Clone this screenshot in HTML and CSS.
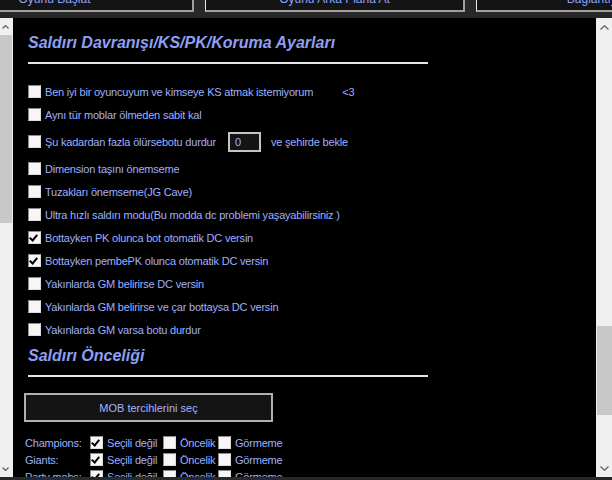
FILE: index.html
```html
<!DOCTYPE html>
<html lang="tr">
<head>
    <meta charset="UTF-8">
    <title>Bot Ayarları</title>
    <link rel="stylesheet" href="styles.css">
</head>
<body>
    <div class="topbar">
        <button class="tbtn first">Oyunu Başlat</button>
        <button class="tbtn">Oyunu Arka Plana At</button>
        <button class="tbtn">Bağlantıyı Kes</button>
    </div>

    <div class="main">
        <div class="scroll left">
            <span class="arrow up"><svg width="7" height="4" viewBox="0 0 7 4"><path d="M0.5 3.5 L3.5 0.5 L6.5 3.5" fill="none" stroke="#606060" stroke-width="1.2"/></svg></span>
            <div class="thumb left-thumb"></div>
            <span class="arrow down"><svg width="7" height="4" viewBox="0 0 7 4"><path d="M0.5 0.5 L3.5 3.5 L6.5 0.5" fill="none" stroke="#606060" stroke-width="1.2"/></svg></span>
        </div>

        <div class="content">
            <h2 class="section-title">Saldırı Davranışı/KS/PK/Koruma Ayarları</h2>
            <div class="rule"></div>

            <div class="options">
                <label class="row"><span class="cb"></span>Ben iyi bir oyuncuyum ve kimseye KS atmak istemiyorum<span class="heart">&lt;3</span></label>
                <label class="row"><span class="cb"></span>Aynı tür moblar ölmeden sabit kal</label>
                <label class="row tall"><span class="cb"></span>Şu kadardan fazla ölürsebotu durdur<span class="num">0</span><span class="after">ve şehirde bekle</span></label>
                <label class="row"><span class="cb"></span>Dimension taşını önemseme</label>
                <label class="row"><span class="cb"></span>Tuzakları önemseme(JG Cave)</label>
                <label class="row"><span class="cb"></span>Ultra hızlı saldırı modu(Bu modda dc problemi yaşayabilirsiniz )</label>
                <label class="row"><span class="cb on"></span>Bottayken PK olunca bot otomatik DC versin</label>
                <label class="row"><span class="cb on"></span>Bottayken pembePK olunca otomatik DC versin</label>
                <label class="row"><span class="cb"></span>Yakınlarda GM belirirse DC versin</label>
                <label class="row"><span class="cb"></span>Yakınlarda GM belirirse ve çar bottaysa DC versin</label>
                <label class="row"><span class="cb"></span>Yakınlarda GM varsa botu durdur</label>
            </div>

            <h2 class="section-title second">Saldırı Önceliği</h2>
            <div class="rule"></div>

            <button class="mob-btn">MOB tercihlerini seç</button>

            <div class="prio">
                <div class="prow">
                    <span class="pname">Champions:</span>
                    <span class="cb on"></span><span class="pl w1">Seçili değil</span>
                    <span class="cb"></span><span class="pl w2">Öncelik</span>
                    <span class="cb"></span><span class="pl">Görmeme</span>
                </div>
                <div class="prow">
                    <span class="pname">Giants:</span>
                    <span class="cb on"></span><span class="pl w1">Seçili değil</span>
                    <span class="cb"></span><span class="pl w2">Öncelik</span>
                    <span class="cb"></span><span class="pl">Görmeme</span>
                </div>
                <div class="prow">
                    <span class="pname">Party mobs:</span>
                    <span class="cb on"></span><span class="pl w1">Seçili değil</span>
                    <span class="cb"></span><span class="pl w2">Öncelik</span>
                    <span class="cb"></span><span class="pl">Görmeme</span>
                </div>
            </div>
        </div>

        <div class="scroll right">
            <span class="arrow up"><svg width="9" height="5" viewBox="0 0 9 5"><path d="M0.5 4.5 L4.5 0.8 L8.5 4.5" fill="none" stroke="#606060" stroke-width="1.3"/></svg></span>
            <div class="thumb right-thumb"></div>
            <span class="arrow down"><svg width="9" height="5" viewBox="0 0 9 5"><path d="M0.5 0.5 L4.5 4.2 L8.5 0.5" fill="none" stroke="#606060" stroke-width="1.3"/></svg></span>
        </div>
    </div>
</body>
</html>
```

FILE: styles.css
```css
body {
    margin: 0;
    padding: 0;
    width: 612px;
    height: 480px;
    overflow: hidden;
    background-color: #282828;
    font-family: "Liberation Sans", Arial, sans-serif;
    font-size: 11px;
    color: #9eb0ff;
}

/* 顶部按钮条 */
.topbar {
    display: flex;
    gap: 11px;
    height: 12px;
    margin-left: -84px;
    overflow: visible;
}

.tbtn {
    flex: none;
    width: 260px;
    height: 24px;
    margin-top: -12px;
    background: #141414;
    border: none;
    border-left: 1px solid #e8e8e8;
    border-right: 2px solid #a0a0a0;
    border-bottom: 2px solid #a0a0a0;
    color: #8ea2ff;
    font-family: "Liberation Sans", Arial, sans-serif;
    font-size: 12px;
    padding: 0;
}

.tbtn.first {
    width: 278px;
}

/* 主区域 */
.main {
    display: flex;
    height: 459px;
    margin-top: 6px;
}

.scroll {
    position: relative;
    flex: none;
    background: #f0f0f0;
}

.scroll.left {
    width: 13px;
}

.scroll.right {
    width: 16px;
}

.arrow {
    position: absolute;
    display: block;
    line-height: 0;
}

.left .arrow { left: 2px; }
.right .arrow { left: 4px; }
.arrow.up { top: 7px; }
.arrow.down { bottom: 6px; }

.thumb {
    position: absolute;
    background: #c8c8c8;
}

.left-thumb {
    left: 0;
    width: 12px;
    top: 17px;
    height: 188px;
}

.right-thumb {
    left: 1px;
    right: 0;
    top: 308px;
    height: 89px;
}

.content {
    flex: 1;
    background: #000;
    padding-left: 15px;
    overflow: hidden;
}

/* 标题 */
.section-title {
    margin: 15px 0 0 0;
    font-size: 16px;
    line-height: 20px;
    font-weight: bold;
    font-style: italic;
    color: #8e9ff2;
}

.section-title.second {
    margin-top: 5px;
}

.rule {
    width: 400px;
    height: 2px;
    margin-top: 9px;
    background: #e6e6e6;
}

/* 选项 */
.options {
    margin-top: 16px;
}

.row {
    display: flex;
    align-items: center;
    height: 23px;
    letter-spacing: -0.2px;
    white-space: nowrap;
}

.row.tall {
    height: 31px;
}

.cb {
    flex: none;
    position: relative;
    box-sizing: border-box;
    width: 13px;
    height: 13px;
    margin-right: 4px;
    background: #f6f6f6;
    border-top: 1px solid #8a8a8a;
    border-left: 1px solid #8a8a8a;
    border-right: 1px solid #dcdcdc;
    border-bottom: 1px solid #dcdcdc;
}

.cb.on::after {
    content: "";
    position: absolute;
    left: 2px;
    top: 1px;
    width: 3px;
    height: 6px;
    border-right: 2px solid #000;
    border-bottom: 2px solid #000;
    transform: rotate(40deg);
}

.heart {
    margin-left: 29px;
}

.num {
    box-sizing: border-box;
    width: 33px;
    height: 20px;
    margin-left: 12px;
    padding-left: 5px;
    line-height: 16px;
    background: #141414;
    border: 2px solid #c4c4c4;
}

.after {
    margin-left: 10px;
}

/* 按钮 */
.mob-btn {
    display: block;
    box-sizing: border-box;
    width: 249px;
    height: 29px;
    margin: 16px 0 0 -4px;
    background: #141414;
    border: 2px solid #b0b0b0;
    color: #a6b4ff;
    font-family: "Liberation Sans", Arial, sans-serif;
    font-size: 11px;
    padding: 0;
}

/* 优先级表 */
.prio {
    margin: 12px 0 0 -3px;
}

.prow {
    display: flex;
    align-items: center;
    height: 17px;
    letter-spacing: -0.2px;
    white-space: nowrap;
}

.pname {
    width: 65px;
}

.pl.w1 {
    width: 56px;
}

.pl.w2 {
    width: 38px;
}
```
